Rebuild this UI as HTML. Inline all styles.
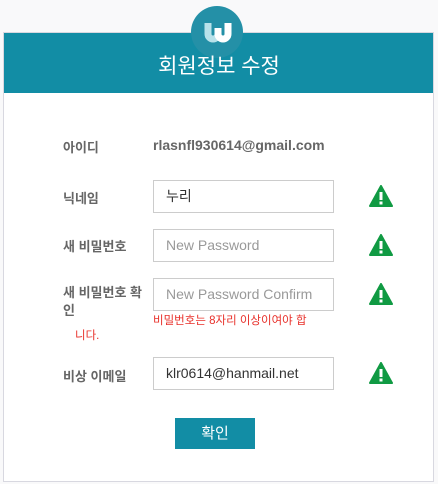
<!DOCTYPE html>
<html><head><meta charset="utf-8"><style>
body{margin:0;width:438px;height:484px;background:#f9f9fa;font-family:"Liberation Sans","Noto Sans CJK KR",sans-serif;position:relative;overflow:hidden}
.box{position:absolute;left:3px;top:32px;width:429px;height:448px;background:#fff;border:1px solid #d8d8e0}
.hdr{position:absolute;left:4px;top:33px;width:429px;height:60px;background:#128da5}
.logo{position:absolute;left:191px;top:6px;width:52px;height:52px;border-radius:50%;background:#2490a7}
.title{position:absolute;left:0;width:438px;top:50px;text-align:center;color:#fff;font-size:21px}
.lbl{position:absolute;left:63px;font-size:13px;color:#666;font-weight:bold}
.inp{position:absolute;left:153px;border:1px solid #ccc;font-size:14px;line-height:31px;padding-left:12px;box-sizing:border-box;width:181px;height:33px;color:#333}
.ph{color:#999}
.warn{position:absolute;left:369px;width:24px;height:22px}
.err{position:absolute;font-size:11.5px;color:#e8302a}
.btn{position:absolute;left:175px;top:418px;width:80px;height:31px;background:#128da5;color:#fff;font-size:15px;text-align:center;line-height:31px}
</style></head><body>
<div class="box"></div>
<div class="hdr"></div>
<div class="logo"><svg width="52" height="52" viewBox="0 0 52 52"><path d="M17 17v11a5 5 0 0 0 10 0" fill="none" stroke="#b8e2ea" stroke-width="7"/><path d="M27 22v6a5 5 0 0 0 10 0V17" fill="none" stroke="#fff" stroke-width="7"/></svg></div>
<div class="title">회원정보 수정</div>
<div class="lbl" style="top:137px">아이디</div>
<div style="position:absolute;left:153px;top:137px;font-size:14px;font-weight:bold;color:#666">rlasnfl930614@gmail.com</div>
<div class="lbl" style="top:188px">닉네임</div>
<div class="inp" style="top:180px">누리</div>
<div class="lbl" style="top:236px">새 비밀번호</div>
<div class="inp ph" style="top:229px">New Password</div>
<div class="lbl" style="top:284px;line-height:18px">새 비밀번호 확<br>인</div>
<div class="inp ph" style="top:278px">New Password Confirm</div>
<div class="err" style="left:153px;top:312px">비밀번호는 8자리 이상이여야 합</div>
<div class="err" style="left:75px;top:327px">니다.</div>
<div class="lbl" style="top:366px">비상 이메일</div>
<div class="inp" style="top:357px">klr0614@hanmail.net</div>
<svg class="warn" style="top:185px" viewBox="0 0 24 22"><path d="M12 1L23 21H1Z" fill="#109a43" stroke="#109a43" stroke-linejoin="round" stroke-width="2"/><rect x="10.5" y="7" width="3" height="8" fill="#fff"/><rect x="10.5" y="16.5" width="3" height="3" fill="#fff"/></svg>
<svg class="warn" style="top:234px" viewBox="0 0 24 22"><path d="M12 1L23 21H1Z" fill="#109a43" stroke="#109a43" stroke-linejoin="round" stroke-width="2"/><rect x="10.5" y="7" width="3" height="8" fill="#fff"/><rect x="10.5" y="16.5" width="3" height="3" fill="#fff"/></svg>
<svg class="warn" style="top:283px" viewBox="0 0 24 22"><path d="M12 1L23 21H1Z" fill="#109a43" stroke="#109a43" stroke-linejoin="round" stroke-width="2"/><rect x="10.5" y="7" width="3" height="8" fill="#fff"/><rect x="10.5" y="16.5" width="3" height="3" fill="#fff"/></svg>
<svg class="warn" style="top:362px" viewBox="0 0 24 22"><path d="M12 1L23 21H1Z" fill="#109a43" stroke="#109a43" stroke-linejoin="round" stroke-width="2"/><rect x="10.5" y="7" width="3" height="8" fill="#fff"/><rect x="10.5" y="16.5" width="3" height="3" fill="#fff"/></svg>
<div class="btn">확인</div>
</body></html>
